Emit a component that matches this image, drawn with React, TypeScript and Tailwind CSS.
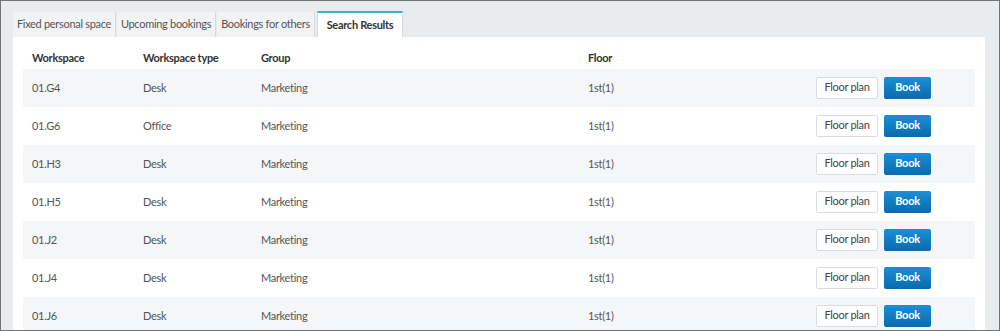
import React from 'react';

const rows = [
  { ws: '01.G4', type: 'Desk' },
  { ws: '01.G6', type: 'Office' },
  { ws: '01.H3', type: 'Desk' },
  { ws: '01.H5', type: 'Desk' },
  { ws: '01.J2', type: 'Desk' },
  { ws: '01.J4', type: 'Desk' },
  { ws: '01.J6', type: 'Desk' },
];

const tabs = [
  { label: 'Fixed personal space', w: 'w-[103px]' },
  { label: 'Upcoming bookings', w: 'w-[99px]' },
  { label: 'Bookings for others', w: 'w-[98px]' },
];

export default function App() {
  return (
    <div
      className="h-[331px] w-[1000px] overflow-hidden border border-[#6f7479] bg-[#e9ecef] pl-3 pr-[14px] pt-[11px] text-[11px] tracking-[-0.3px] text-[#555]"
      style={{ fontFamily: 'Lato, "Open Sans", sans-serif' }}
    >
      <div className="flex h-[25px] items-end">
        {tabs.map((t) => (
          <div
            key={t.label}
            className={`mr-[1px] flex h-[25px] items-center justify-center whitespace-nowrap border-r border-[#d5d9dd] bg-[#f1f3f5] text-[#555] ${t.w}`}
          >
            {t.label}
          </div>
        ))}
        <div className="ml-[1px] flex h-[26px] w-[86px] items-center justify-center whitespace-nowrap border-x border-[#d5d9dd] border-t-2 border-t-[#3ab0e2] bg-white font-bold text-[#333]">
          Search Results
        </div>
      </div>
      <div className="h-[400px] bg-white px-[10px] pt-[13px]">
        <table className="w-full border-collapse">
          <thead>
            <tr className="h-[19px] text-left font-bold text-[#333]">
              <th className="w-[111px] pl-[9px] align-top">Workspace</th>
              <th className="w-[118px] pl-[9px] align-top">Workspace type</th>
              <th className="w-[327px] pl-[9px] align-top">Group</th>
              <th className="pl-[9px] align-top">Floor</th>
              <th></th>
            </tr>
          </thead>
          <tbody>
            {rows.map((r, i) => (
              <tr key={r.ws} className={`h-[38px] ${i % 2 === 0 ? 'bg-[#f4f6f8]' : 'bg-white'}`}>
                <td className="pl-[9px]">{r.ws}</td>
                <td className="pl-[9px]">{r.type}</td>
                <td className="pl-[9px]">Marketing</td>
                <td className="pl-[9px]">1st(1)</td>
                <td className="pr-[44px]">
                  <div className="mb-[1px] flex justify-end gap-[6px]">
                    <button className="h-[22px] w-[62px] rounded-[2px] border border-[#d9dde1] bg-white text-[11px] text-[#444]">
                      Floor plan
                    </button>
                    <button className="h-[22px] w-[47px] rounded-[2px] bg-gradient-to-b from-[#1b8fd6] to-[#0a6aae] text-[11px] font-bold text-white">
                      Book
                    </button>
                  </div>
                </td>
              </tr>
            ))}
          </tbody>
        </table>
      </div>
    </div>
  );
}
